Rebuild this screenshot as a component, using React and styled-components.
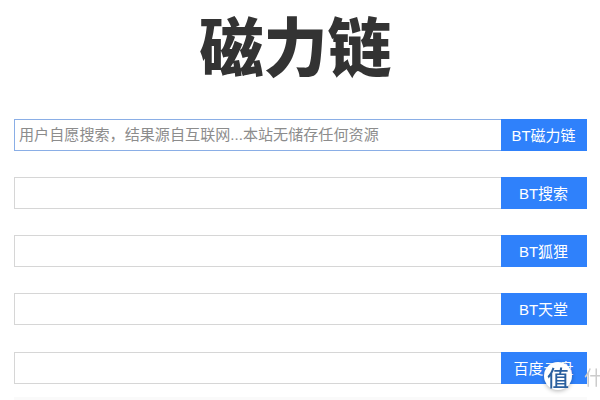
import React from 'react';
import styled, { createGlobalStyle } from 'styled-components';

const FONT = '"Liberation Sans", "Noto Sans CJK SC", sans-serif';

const rows = [
  { label: 'BT磁力链', placeholder: '用户自愿搜索，结果源自互联网...本站无储存任何资源', active: true },
  { label: 'BT搜索' },
  { label: 'BT狐狸' },
  { label: 'BT天堂' },
  { label: '百度云盘' },
];

// --- Styles --- //

const GlobalStyle = createGlobalStyle`
  html, body {
    background-color: #fff;
    height: 400px;
    margin: 0;
    overflow: hidden;
  }
`

const Page = styled.main`
  box-sizing: border-box;
  display: flex;
  flex-direction: column;
  font-family: ${FONT};
  height: 400px;
  overflow: hidden;
  padding: 0 13px 0 14px;
`

const Title = styled.h1`
  color: #333;
  font-size: 64px;
  font-weight: 900;
  line-height: 92px;
  margin: 3px 10px 24px 0;
  text-align: center;
`

const SearchList = styled.div`
  display: flex;
  flex-direction: column;
  gap: 26.25px;
  margin-top: -0.5px;
`

const SearchRow = styled.form`
  display: flex;
  height: 32px;
  margin: 0;
`

const SearchInput = styled.input`
  border: 1px solid ${(props) => (props.$active ? '#8aaee6' : '#d6d6d6')};
  border-right: none;
  box-sizing: border-box;
  color: #555;
  flex: 1;
  font-family: ${FONT};
  font-size: 15.1px;
  height: 32px;
  min-width: 0;
  outline: none;
  padding: 0 4px;

  &::placeholder {
    color: #8c8c8c;
    opacity: 1;
  }
`

const SearchButton = styled.button`
  background-color: #2f81fb;
  border: none;
  color: #fff;
  cursor: pointer;
  flex: 0 0 86px;
  font-family: ${FONT};
  font-size: 15px;
  height: 32px;
  padding: 0 1px 1px 0;
`

const BottomBand = styled.div`
  background-color: #fafafa;
  flex: 1;
  margin-top: 13px;
`

const WatermarkBadge = styled.div`
  align-items: center;
  background-color: #fff;
  border-radius: 50%;
  bottom: 10px;
  box-shadow: 0 1px 4px rgba(0, 0, 0, 0.3);
  color: #2a5f9e;
  display: flex;
  font-family: "Noto Sans CJK SC", sans-serif;
  font-size: 22px;
  font-weight: 500;
  height: 28px;
  justify-content: center;
  position: fixed;
  right: 28px;
  width: 28px;
`

const WatermarkText = styled.span`
  bottom: 11px;
  color: #cccccc;
  font-family: "Noto Sans CJK SC", sans-serif;
  font-size: 19px;
  line-height: 24px;
  position: fixed;
  right: -3px;
`

// --- Component --- //

const App = () => {
  return (
    <Page>
      <GlobalStyle />
      <Title>磁力链</Title>
      <SearchList>
        {rows.map((row) => (
          <SearchRow key={row.label} onSubmit={(e) => e.preventDefault()}>
            <SearchInput $active={row.active} placeholder={row.placeholder} />
            <SearchButton>{row.label}</SearchButton>
          </SearchRow>
        ))}
      </SearchList>
      <BottomBand />
      <WatermarkBadge>值</WatermarkBadge>
      <WatermarkText>什</WatermarkText>
    </Page>
  )
}

export default App;
